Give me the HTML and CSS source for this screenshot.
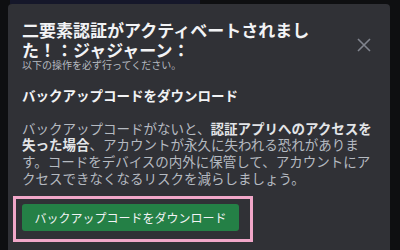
FILE: index.html
```html
<!DOCTYPE html>
<html lang="ja">

<head>
    <meta charset="UTF-8">
    <meta name="viewport" content="width=device-width, initial-scale=1.0">
    <title>二要素認証</title>
    <link rel="stylesheet" href="styles.css">
</head>

<body>
    <div class="backdrop-strip"></div>
    <div class="modal">
        <div class="modal-header">
            <div class="header-text">
                <h2 class="modal-title">二要素認証がアクティベートされました！：ジャジャーン：</h2>
                <p class="modal-subtitle">以下の操作を必ず行ってください。</p>
            </div>
            <button class="close-btn" type="button" aria-label="閉じる">
                <svg width="14" height="14" viewBox="0 0 14 14">
                    <path d="M1 1 L13 13 M13 1 L1 13" stroke="#80848e" stroke-width="1.6" fill="none" />
                </svg>
            </button>
        </div>

        <h3 class="section-title">バックアップコードをダウンロード</h3>
        <p class="section-text">バックアップコードがないと、<strong>認証アプリへのアクセスを失った場合</strong>、アカウントが永久に失われる恐れがあります。コードをデバイスの内外に保管して、アカウントにアクセスできなくなるリスクを減らしましょう。</p>

        <div class="highlight">
            <button class="download-btn" type="button">バックアップコードをダウンロード</button>
        </div>
    </div>
</body>

</html>
```

FILE: styles.css
```css
body {
    margin: 0;
    height: 250px;
    background-color: #0e0f11;
    font-family: "Noto Sans CJK JP", "Noto Sans", sans-serif;
    overflow: hidden;
}

.backdrop-strip {
    height: 4px;
    width: 190px;
    margin-left: 10px;
    background-color: #15172a;
}

.modal {
    margin: 0 10px 0 8px;
    height: 246px;
    background-color: #303136;
    border-radius: 4px 4px 0 0;
    padding: 16px 14px 0 14px;
    box-sizing: border-box;
}

.modal-header {
    display: flex;
    align-items: flex-start;
}

.header-text {
    width: 300px;
}

.modal-title {
    margin: 0;
    color: #f2f3f5;
    font-size: 17px;
    line-height: 20px;
    font-weight: bold;
}

.modal-subtitle {
    margin: -1.5px 0 0 0;
    color: #b5bac1;
    font-size: 10px;
    line-height: 12px;
}

.close-btn {
    margin: 18px 0 0 35px;
    padding: 0;
    background: none;
    border: none;
    width: 14px;
    height: 14px;
}

.section-title {
    margin: 15.5px 0 0 0;
    color: #f2f3f5;
    font-size: 13.5px;
    line-height: 18px;
    font-weight: bold;
}

.section-text {
    margin: 15.5px 0 0 0;
    color: #b5bac1;
    font-size: 13.5px;
    line-height: 16.7px;
}

.section-text strong {
    color: #e3e5e8;
}

.highlight {
    margin: 9.5px 0 0 -9px;
    width: 217px;
    padding: 5px 11px 8px 6px;
    border: 3px solid #f1a7c9;
}

.download-btn {
    display: block;
    width: 217px;
    height: 27px;
    border: none;
    border-radius: 3px;
    background-color: #248046;
    color: #f2f3f5;
    font-family: "Noto Sans CJK JP", "Noto Sans", sans-serif;
    font-size: 12px;
}
```
